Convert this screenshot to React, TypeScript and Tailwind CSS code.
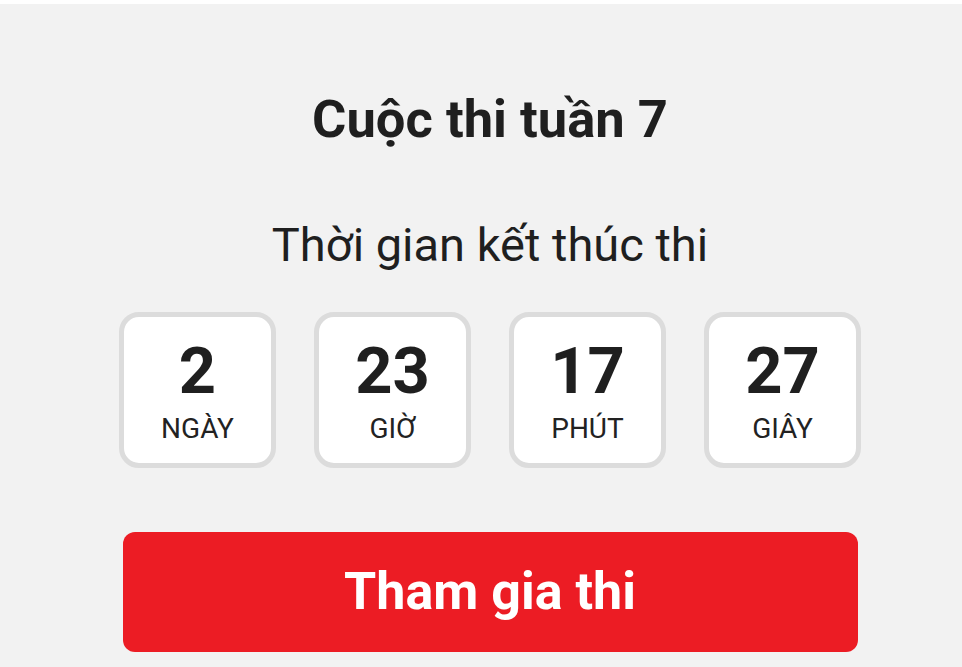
const units = [
  { value: "2", label: "NGÀY" },
  { value: "23", label: "GIỜ" },
  { value: "17", label: "PHÚT" },
  { value: "27", label: "GIÂY" },
];

function CountdownBox({ value, label }: { value: string; label: string }) {
  return (
    <div className="flex h-[156px] w-[157px] flex-col items-center justify-center gap-[11px] rounded-[20px] border-[5px] border-[#dcdcdc] bg-white">
      <span className="text-[65px] font-bold leading-[66px] text-[#1f1f1f]">{value}</span>
      <span className="text-[28px] leading-[28px] text-[#222222]">{label}</span>
    </div>
  );
}

export default function App() {
  return (
    <div
      className="min-h-screen bg-[#f2f2f2]"
      style={{ fontFamily: "Roboto, 'Noto Sans', sans-serif" }}
    >
      <div className="h-[4px] bg-white" />
      <div className="flex flex-col items-center pl-[18px] pt-[85px]">
        <h1 className="text-[52.5px] font-bold leading-[60px] text-[#1f1f1f]">Cuộc thi tuần 7</h1>
        <p className="mt-[68px] text-[47px] leading-[56px] text-[#1f1f1f]">Thời gian kết thúc thi</p>
        <div className="mt-[39px] flex gap-[38px]">
          {units.map((u) => (
            <CountdownBox key={u.label} value={u.value} label={u.label} />
          ))}
        </div>
        <button className="mt-[64px] h-[120px] w-[735px] rounded-[12px] bg-[#ec1c24] text-[52px] font-bold leading-[120px] text-white">
          Tham gia thi
        </button>
      </div>
    </div>
  );
}
